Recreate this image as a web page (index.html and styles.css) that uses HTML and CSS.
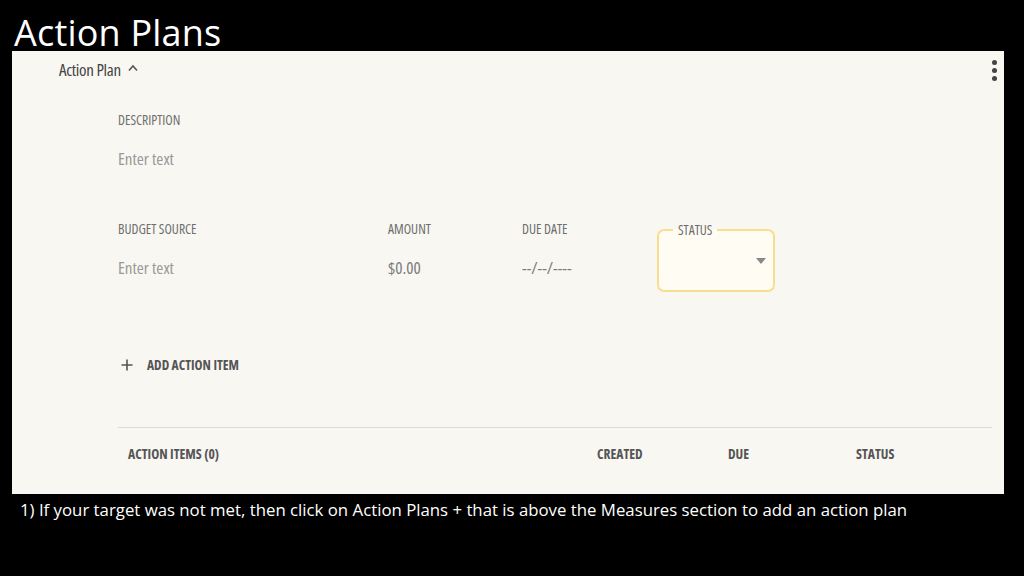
FILE: index.html
```html
<!DOCTYPE html>
<html>
<head>
<meta charset="utf-8">
<link rel="stylesheet" href="styles.css">
</head>
<body>
<h1 class="slide-title">Action Plans</h1>
<section class="panel">
  <div class="panel-head">
    <span class="panel-title">Action Plan</span>
    <svg class="chev" width="10" height="8" viewBox="0 0 10 8"><path d="M1 6.5 L5 2 L9 6.5" fill="none" stroke="#555" stroke-width="1.6"/></svg>
    <span class="spacer"></span>
    <span class="kebab"><i></i><i></i><i></i></span>
  </div>
  <div class="content">
    <div class="field desc">
      <div class="label">DESCRIPTION</div>
      <div class="value">Enter text</div>
    </div>
    <div class="field-row">
      <div class="field">
        <div class="label">BUDGET SOURCE</div>
        <div class="value">Enter text</div>
      </div>
      <div class="field">
        <div class="label">AMOUNT</div>
        <div class="value dark">$0.00</div>
      </div>
      <div class="field">
        <div class="label">DUE DATE</div>
        <div class="value dark">--/--/----</div>
      </div>
      <fieldset class="status">
        <legend>STATUS</legend>
        <span class="caret"></span>
      </fieldset>
    </div>
    <div class="add-item">
      <svg width="12" height="12" viewBox="0 0 12 12"><path d="M6 0.5 V11.5 M0.5 6 H11.5" stroke="#555" stroke-width="1.6"/></svg>
      <span>ADD ACTION ITEM</span>
    </div>
    <hr class="divider">
    <div class="table-head">
      <span>ACTION ITEMS (0)</span>
      <span>CREATED</span>
      <span>DUE</span>
      <span>STATUS</span>
    </div>
  </div>
</section>
<p class="caption">1) If your target was not met, then click on Action Plans + that is above the Measures section to add an action plan</p>
</body>
</html>
```
FILE: styles.css
```css
html, body {
  margin: 0;
  padding: 0;
  background: #000;
  width: 1024px;
  height: 576px;
  overflow: hidden;
}
.slide-title {
  margin: 0;
  height: 51px;
  padding-left: 14px;
  box-sizing: border-box;
  font-family: "Open Sans", sans-serif;
  font-weight: 400;
  font-size: 36px;
  line-height: 66px;
  letter-spacing: 0.2px;
  color: #fff;
  white-space: nowrap;
}
.panel {
  margin-left: 12px;
  width: 992px;
  height: 443px;
  background: #f8f7f2;
  font-family: "Open Sans", sans-serif;
  font-stretch: 75%;
  color: #5a5a5a;
}
.panel-head {
  height: 36px;
  padding-left: 47px;
  padding-right: 7px;
  display: flex;
  align-items: center;
}
.panel-title {
  font-size: 17px;
  font-weight: 500;
  color: #444;
  letter-spacing: -0.3px;
}
.chev { margin-left: 7px; margin-top: -3px; }
.spacer { flex: 1; }
.kebab {
  display: flex;
  flex-direction: column;
  gap: 3px;
  margin-top: 2px;
}
.kebab i {
  display: block;
  width: 5px;
  height: 5px;
  border-radius: 50%;
  background: #444;
}
.content {
  padding-left: 106px;
  padding-right: 12px;
}
.field.desc { padding-top: 26px; }
.label {
  font-size: 13.6px;
  line-height: 14px;
  height: 14px;
  color: #6e6e6e;
}
.value {
  font-size: 17px;
  line-height: 22px;
  height: 22px;
  margin-top: 21px;
  color: #9a9a9a;
}
.value.dark { color: #7a7a7a; }
.field-row {
  margin-top: 52px;
  display: grid;
  grid-template-columns: 270px 134px 135px 118px;
  align-items: start;
}
.status {
  margin: 2px 0 0 0;
  height: 68px;
  box-sizing: border-box;
  border: 2px solid #f7dd8e;
  border-radius: 7px;
  background: #fffdf3;
  padding: 0 7px 0 14px;
  display: flex;
  justify-content: flex-end;
  align-items: center;
}
.status legend {
  padding: 0 5px;
  font-size: 13.6px;
  line-height: 12px;
  color: #6e6e6e;
}
.caret {
  width: 0;
  height: 0;
  border-left: 5px solid transparent;
  border-right: 5px solid transparent;
  border-top: 6px solid #888;
  margin-top: -4px;
}
.add-item {
  margin-top: 63px;
  height: 20px;
  display: flex;
  align-items: center;
  padding-left: 3px;
  gap: 14px;
  font-size: 13.5px;
  font-weight: 700;
  color: #555;
}
.divider {
  margin: 52px 0 0 0;
  border: 0;
  border-top: 1px solid #dcdad5;
  height: 0;
}
.table-head {
  margin-top: 16px;
  height: 20px;
  line-height: 20px;
  padding-left: 10px;
  display: grid;
  grid-template-columns: 469px 131px 128px 1fr;
  font-size: 13.6px;
  font-weight: 700;
  color: #555;
}
.caption {
  margin: 0;
  padding: 5px 0 0 20px;
  font-family: "Open Sans", sans-serif;
  font-size: 16.8px;
  line-height: 22px;
  color: #fff;
  white-space: nowrap;
}
```
